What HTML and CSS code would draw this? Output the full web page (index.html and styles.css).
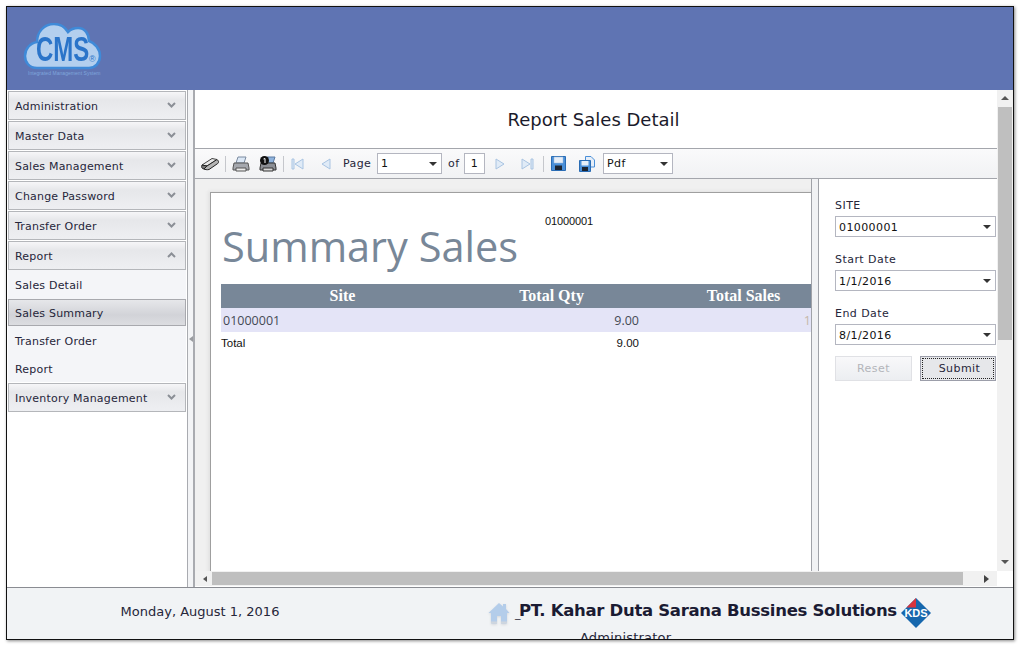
FILE: index.html
```html
<!DOCTYPE html>
<html lang="en">
<head>
<meta charset="utf-8">
<title>Report Sales Detail</title>
<link rel="stylesheet" href="styles.css">
</head>
<body>
<div class="window">
  <header class="top">
    <div class="logo">
      <svg class="cloud" width="79" height="47" viewBox="0 0 79 47"><path d="M14 45C6 45 2 39 2 33C2 26 7 20 14 19C14 9 21 1 31 1C37 1 42 4 45 9C48 6 51 5 55 5C62 5 66 11 66 18C72 20 77 26 77 33C77 40 72 45 66 45Z" fill="#b3cfee" stroke="#3f8ad8" stroke-width="2.500"/></svg>
      <span class="cms">CMS</span>
      <i class="reg">®</i>
      <span class="tag">Integrated Management System</span>
    </div>
  </header>
  <div class="mid">
    <nav class="side">
      <div class="acc"><span>Administration</span><svg class="chev" width="9" height="6" viewBox="0 0 9 6"><path d="M1 1L4.500 4.500L8 1" fill="none" stroke="#8b8f96" stroke-width="2"/></svg></div>
      <div class="acc"><span>Master Data</span><svg class="chev" width="9" height="6" viewBox="0 0 9 6"><path d="M1 1L4.500 4.500L8 1" fill="none" stroke="#8b8f96" stroke-width="2"/></svg></div>
      <div class="acc"><span>Sales Management</span><svg class="chev" width="9" height="6" viewBox="0 0 9 6"><path d="M1 1L4.500 4.500L8 1" fill="none" stroke="#8b8f96" stroke-width="2"/></svg></div>
      <div class="acc"><span>Change Password</span><svg class="chev" width="9" height="6" viewBox="0 0 9 6"><path d="M1 1L4.500 4.500L8 1" fill="none" stroke="#8b8f96" stroke-width="2"/></svg></div>
      <div class="acc"><span>Transfer Order</span><svg class="chev" width="9" height="6" viewBox="0 0 9 6"><path d="M1 1L4.500 4.500L8 1" fill="none" stroke="#8b8f96" stroke-width="2"/></svg></div>
      <div class="group">
        <div class="acc"><span>Report</span><svg class="chev" width="9" height="6" viewBox="0 0 9 6"><path d="M1 5L4.500 1.500L8 5" fill="none" stroke="#8b8f96" stroke-width="2"/></svg></div>
        <div class="sub s-first">Sales Detail</div>
        <div class="sub sel">Sales Summary</div>
        <div class="sub">Transfer Order</div>
        <div class="sub">Report</div>
      </div>
      <div class="acc"><span>Inventory Management</span><svg class="chev" width="9" height="6" viewBox="0 0 9 6"><path d="M1 1L4.500 4.500L8 1" fill="none" stroke="#8b8f96" stroke-width="2"/></svg></div>
    </nav>
    <div class="split"><i class="tri-left"></i></div>
    <div class="content">
      <div class="upper">
        <main class="page">
          <h1 class="title">Report Sales Detail</h1>
          <div class="toolbar">
            <svg class="ic m-find" width="20" height="14" viewBox="0 0 20 14"><path d="M2 8L12 1.500L17 2.500L7 9Z" fill="#e8e8e8" stroke="#444"/><path d="M2 8C1 10 2 12 4 12C6 12 7 11 7 9Z" fill="#777" stroke="#222"/><path d="M7 9L17 2.500C19 4 19 6 17 7L9 12.500C7 13 5 12.500 4 12Z" fill="#b5b5b5" stroke="#222"/></svg>
            <b class="sep m-6"></b>
            <svg class="ic m-9" width="18" height="16" viewBox="0 0 18 16"><path d="M6 1H14L12 7H4Z" fill="#dbe7f5" stroke="#7b8ba0"/><path d="M2 7H16L17 12V14H1V12Z" fill="#a5a8ae" stroke="#555"/><path d="M4 12H14V15H4Z" fill="#ececec" stroke="#555"/></svg>
            <svg class="ic m-6" width="18" height="16" viewBox="0 0 18 16"><path d="M8 1H16L14 7H6Z" fill="#8fb3dd" stroke="#5c7aa0"/><path d="M2 7H16L17 12V14H1V12Z" fill="#8b8e94" stroke="#333"/><path d="M4 12H14V15H4Z" fill="#d8d8d8" stroke="#333"/><circle cx="5.500" cy="4.500" r="4.500" fill="#111"/><path d="M4.500 3L6 2.500V7" stroke="#fff" fill="none"/></svg>
            <b class="sep m-7"></b>
            <svg class="ic m-16" width="13" height="12" viewBox="0 0 13 12"><path d="M1 1V11H3V1ZM12 1L4 6L12 11Z" fill="#e0ebf7" stroke="#a9c4e2"/></svg>
            <svg class="ic m-12" width="11" height="12" viewBox="0 0 11 12"><path d="M10 1L2 6L10 11Z" fill="#e0ebf7" stroke="#a9c4e2"/></svg>
            <span class="tb-label l-page">Page</span>
            <div class="combo c-page"><span>1</span><i class="tri-down"></i></div>
            <span class="tb-label l-of">of</span>
            <div class="box-one">1</div>
            <svg class="ic m-15" width="11" height="12" viewBox="0 0 11 12"><path d="M1 1L9 6L1 11Z" fill="#e0ebf7" stroke="#a9c4e2"/></svg>
            <svg class="ic m-9" width="13" height="12" viewBox="0 0 13 12"><path d="M12 1V11H10V1ZM1 1L9 6L1 11Z" fill="#e0ebf7" stroke="#a9c4e2"/></svg>
            <b class="sep m-7"></b>
            <svg class="ic m-13" width="15" height="15" viewBox="0 0 15 15"><path d="M.5 .5H14.500V14.500H.5Z" fill="#4a8fd8" stroke="#2a6cb4"/><path d="M3 1H12V7H3Z" fill="#e6eef8" stroke="#9db8d8" stroke-width=".5"/><path d="M4 9.500H11V14H4Z" fill="#1c2430"/></svg>
            <svg class="ic m-8" width="16" height="16" viewBox="0 0 16 16"><path d="M6.500 .5H12L15.500 4V11H6.500Z" fill="#e6eef8" stroke="#4a8fd8"/><path d="M.5 4.500H11.500V15.500H.5Z" fill="#4a8fd8" stroke="#2a6cb4"/><path d="M2.500 5H9.500V9.500H2.500Z" fill="#e6eef8"/><path d="M3 11H9V15H3Z" fill="#1c2430"/></svg>
            <div class="combo c-fmt"><span>Pdf</span><i class="tri-down"></i></div>
          </div>
          <div class="viewer">
            <div class="report-area">
              <div class="sheet">
                <div class="site-no">01000001</div>
                <div class="big">Summary Sales</div>
                <table class="grid">
                  <thead><tr><th class="c1">Site</th><th class="c2">Total Qty</th><th class="c3">Total Sales</th></tr></thead>
                  <tbody>
                    <tr class="odd"><td class="c1 l">01000001</td><td class="c2 r">9.00</td><td class="c3 r cut">1</td></tr>
                    <tr class="tot"><td class="c1">Total</td><td class="c2 r">9.00</td><td class="c3"></td></tr>
                  </tbody>
                </table>
              </div>
            </div>
            <div class="vsplit"></div>
            <aside class="params">
              <label class="p-label">SITE</label>
              <div class="combo c-param"><span>01000001</span><i class="tri-down"></i></div>
              <label class="p-label">Start Date</label>
              <div class="combo c-param"><span>1/1/2016</span><i class="tri-down"></i></div>
              <label class="p-label">End Date</label>
              <div class="combo c-param"><span>8/1/2016</span><i class="tri-down"></i></div>
              <div class="btns">
                <div class="btn off">Reset</div>
                <div class="btn on"><span>Submit</span></div>
              </div>
            </aside>
          </div>
        </main>
        <div class="vbar">
          <i class="tri-up"></i>
          <div class="vthumb"></div>
          <i class="tri-down"></i>
        </div>
      </div>
      <div class="hbar">
        <div class="htrack">
          <i class="tri-left dark"></i>
          <div class="hthumb"></div>
          <i class="tri-right"></i>
        </div>
        <div class="corner"></div>
      </div>
    </div>
  </div>
  <footer class="foot">
    <div class="date">Monday, August 1, 2016</div>
    <div class="co">
      <div class="co-line">
        <svg class="home" width="22" height="22" viewBox="0 0 22 22"><path d="M11 1L15 4.500V2H18V7L21.500 11H19V20.500C19 21 18.500 21.500 18 21.500H13V14H9V21.500H4C3.500 21.500 3 21 3 20.500V11H.5Z" fill="#b4cdea"/><path d="M3 19.500H9V21.500H4C3.500 21.500 3 21 3 20.500ZM13 19.500H19V20.500C19 21 18.500 21.500 18 21.500H13Z" fill="#cfd6de"/></svg>
        <span class="us">_</span><strong class="co-name">PT. Kahar Duta Sarana Bussines Solutions</strong>
        <svg class="kds" width="30" height="30" viewBox="0 0 30 30"><path d="M15 0L30 15L15 30L0 15Z" fill="#1667ad"/><path d="M15 0L5.500 9.500H15Z" fill="#d8343d"/><text x="15" y="19" text-anchor="middle" class="kds-t">KDS</text></svg>
      </div>
      <div class="admin">Administrator</div>
    </div>
  </footer>
</div>
</body>
</html>
```
FILE: styles.css
```css
* { box-sizing: border-box; }
html, body { margin: 0; height: 100%; background: #fff; }
body { padding: 6px; font-family: "DejaVu Sans", sans-serif; font-size: 11px; color: #2a2a3a; overflow: hidden; }
.window { width: 1008px; height: 634px; border: 1px solid #111; box-shadow: 1px 1px 3px #888; display: flex; flex-direction: column; overflow: hidden; background: #fff; }

.top { height: 83px; flex: none; background: #5f74b3; padding: 16px 0 0 16px; }
.logo { position: relative; width: 80px; height: 62px; }
.cloud { display: block; }
.cms { position: absolute; left: 13px; top: 14px; font: bold 24px/24px "Liberation Sans", sans-serif; color: #2a74c9; transform: scaleY(1.45); transform-origin: 0 50%; }
.reg { position: absolute; left: 66px; top: 31px; font: normal 9px/10px "Liberation Sans", sans-serif; color: #2a74c9; }
.tag { position: absolute; left: 5px; top: 47px; white-space: nowrap; font: 5px/6px "Liberation Sans", sans-serif; letter-spacing: .05px; color: #7fa6dc; }

.mid { flex: 1; display: flex; min-height: 0; }
.side { width: 180px; flex: none; padding: 1px 1px 0; background: #fff; display: flex; flex-direction: column; gap: 1px; }
.acc { height: 29px; flex: none; border: 1px solid #b4b6ba; background: linear-gradient(#f6f6f8 0, #e6e7ea 30%, #eeeff2 100%); display: flex; align-items: center; justify-content: space-between; padding: 2px 9px 0 6px; font-size: 11px; letter-spacing: 0.2px; color: #26263a; }
.chev { display: block; margin-top: -4px; }
.group { background: #f4f5f8; }
.sub { height: 28px; display: flex; align-items: center; padding: 2px 0 0 7px; letter-spacing: 0.2px; color: #26263a; }
.s-first { height: 29px; }
.sel { height: 27px; padding-left: 6px; border: 1px solid #a8a9ae; background: linear-gradient(#e6e7ea, #d2d3d8 60%, #dcdde1); }

.split { width: 8px; flex: none; background: #f3f4f6; border-left: 1px solid #a9abb0; border-right: 2px solid #a9abb0; display: flex; align-items: center; justify-content: center; }
.tri-left { display: block; width: 0; height: 0; border: 3px solid transparent; border-left: 0; border-right: 4px solid #9a9ca0; }
.tri-left.dark { border-right-color: #555; }
.tri-right { display: block; width: 0; height: 0; border: 4px solid transparent; border-right: 0; border-left: 5px solid #444; }
.tri-up { display: block; width: 0; height: 0; border: 4px solid transparent; border-top: 0; border-bottom: 4px solid #555; }
.tri-down { display: block; width: 0; height: 0; border: 4px solid transparent; border-bottom: 0; border-top: 4px solid #333; }

.content { flex: 1; min-width: 0; display: flex; flex-direction: column; }
.upper { flex: 1; min-height: 0; display: flex; }
.page { width: 802px; flex: none; display: flex; flex-direction: column; min-height: 0; }
.title { margin: 0; height: 59px; padding-right: 5px; border-bottom: 1px solid #a4a6ac; font: 400 18px/59px "DejaVu Sans", sans-serif; text-align: center; color: #1b1b2b; }
.toolbar { height: 30px; flex: none; background: linear-gradient(#fafafb, #f1f2f4); border-bottom: 1px solid #a4a6ac; display: flex; align-items: center; padding-left: 5px; font-size: 11px; letter-spacing: 0.4px; }
.ic { display: block; flex: none; }
.m-find { margin-right: 5px; }
.m-6 { margin-right: 6px; }
.m-7 { margin-right: 7px; }
.m-8 { margin-right: 8px; }
.m-9 { margin-right: 9px; }
.m-12 { margin-right: 12px; }
.m-13 { margin-right: 13px; }
.m-15 { margin-right: 15px; }
.m-16 { margin-right: 16px; }
.sep { display: block; width: 1px; height: 16px; background: #c5c7cc; flex: none; }
.tb-label { flex: none; color: #26263a; }
.l-page { width: 34px; }
.l-of { width: 16px; }
.combo { display: flex; align-items: center; justify-content: space-between; background: #fff; border: 1px solid #b4b6c0; padding: 0 4px 0 3px; height: 21px; letter-spacing: 0.4px; color: #111; flex: none; }
.c-page { width: 65px; margin-right: 6px; }
.box-one { width: 21px; height: 21px; line-height: 19px; text-align: center; background: #fff; border: 1px solid #b4b6c0; margin-right: 10px; color: #111; flex: none; }
.c-fmt { width: 70px; }

.viewer { flex: 1; min-height: 0; display: flex; }
.report-area { width: 616px; flex: none; background: #f0f0f0; padding: 13px 0 0 15px; overflow: hidden; }
.sheet { width: 640px; height: 500px; background: #fff; border-top: 1px solid #9f9f9f; border-left: 1px solid #9f9f9f; padding: 0 0 0 10px; box-shadow: -2px -1px 3px #e2e2e2; }
.site-no { font: 11px/14px "Liberation Sans", sans-serif; color: #111; padding: 21px 0 0 324px; letter-spacing: -0.1px; }
.big { font: 400 41.500px/50px "Open Sans", sans-serif; color: #788798; margin: -7px 0 13px 1px; white-space: nowrap; }
.grid { border-collapse: collapse; table-layout: fixed; width: 627px; }
.c1 { width: 243px; }
.c2 { width: 175px; }
.c3 { width: 209px; }
.grid th { height: 24px; padding: 0; background: #788798; color: #fff; font: bold 16px/24px "Liberation Serif", serif; text-align: center; }
.grid td { padding: 0; }
.odd td { height: 24px; padding-top: 1px; background: #e4e4f7; font: 12.500px/23px "Open Sans", sans-serif; color: #444a55; }
.tot td { height: 22px; font: 11.500px/22px "Liberation Sans", sans-serif; color: #111; }
.l { padding-left: 2px !important; }
.r { text-align: right; }
.cut { padding-right: 37px !important; color: #c6b8a8 !important; }

.vsplit { width: 8px; flex: none; background: #f1f2f4; border-left: 1px solid #a0a2a8; border-right: 1px solid #a0a2a8; }
.params { flex: 1; min-width: 0; padding: 4px 0 0 16px; background: #fff; display: flex; flex-direction: column; letter-spacing: 0.45px; }
.p-label { display: block; height: 13px; line-height: 13px; margin: 16px 0 4px; color: #26263a; }
.c-param { width: 161px; height: 21px; }
.c-param span { padding-top: 1px; }
.btns { display: flex; gap: 8px; margin-top: 11px; width: 161px; }
.btn { height: 25px; display: flex; align-items: center; justify-content: center; background: linear-gradient(#f8f8fa, #eceef1); }
.off { width: 77px; border: 1px solid #e0e1e5; color: #b3b5ba; }
.on { width: 76px; border: 1px solid #9c9eaa; color: #26263a; padding: 1px; background: #e6e7ea; }
.on span { flex: 1; align-self: stretch; display: flex; align-items: center; justify-content: center; padding-left: 3px; border: 1px dotted #222; }

.vbar { width: 16px; flex: none; background: #f1f1f1; display: flex; flex-direction: column; align-items: center; padding: 4px 0 7px; }
.vbar .tri-up { margin-top: 2px; }
.vthumb { width: 14px; height: 233px; background: #bfbfbf; margin-top: 7px; }
.vbar .tri-down { margin-top: auto; border-top-color: #555; }

.hbar { height: 16px; flex: none; display: flex; background: #fff; }
.htrack { width: 802px; height: 15px; background: #f1f1f1; display: flex; align-items: center; padding: 0 8px 0 8px; }
.hthumb { width: 751px; height: 13px; background: #bfbfbf; margin: 0 auto 0 5px; }
.corner { flex: 1; background: #fff; }

.foot { height: 52px; flex: none; background: #f1f3f5; border-top: 1px solid #8a8c92; display: flex; overflow: hidden; }
.date { width: 386px; flex: none; padding: 16px 0 0 0; text-align: center; font-size: 13px; color: #26263a; }
.co { display: flex; flex-direction: column; width: 600px; flex: none; padding: 10px 0 0 95px; }
.co-line { display: flex; align-items: center; height: 26px; }
.home { flex: none; margin-top: 3px; filter: drop-shadow(0 1px 1px #d4d6da); }
.us { font-size: 11px; width: 9px; flex: none; padding-left: 5px; margin-top: 4px; }
.co-name { font: bold 16.500px/24px "DejaVu Sans", sans-serif; color: #1b1b33; white-space: nowrap; letter-spacing: -0.3px; flex: none; }
.kds { margin: 4px 0 0 4px; flex: none; }
.kds-t { font: bold 11px "Liberation Sans", sans-serif; fill: #fff; }
.admin { font-size: 13px; line-height: 16px; padding: 6px 0 0 92px; white-space: nowrap; letter-spacing: 0.2px; color: #26263a; }
```
